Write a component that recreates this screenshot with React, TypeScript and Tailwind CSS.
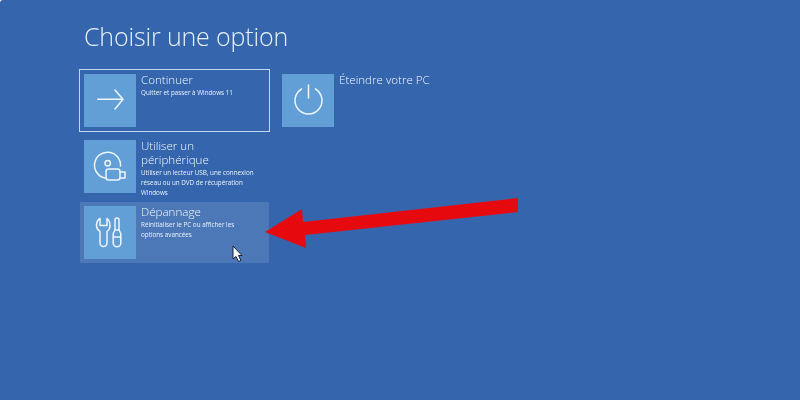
const font = { fontFamily: '"Open Sans", "Noto Sans", sans-serif' };

function Tile({ icon, title, desc, wide = true }: { icon: React.ReactNode; title: string; desc?: string; wide?: boolean }) {
  return (
    <div className="flex items-start gap-[5px]">
      <div className="h-[53px] w-[52px] shrink-0 bg-[#629fd6]">{icon}</div>
      <div className={wide ? "w-[115px]" : "w-[160px]"}>
        <div className="-mt-[1px] text-[11.6px] font-light leading-[14px] text-[#f2f7fd]">{title}</div>
        {desc && <div className="mt-[1px] text-[6.3px] leading-[10px] text-[#eaf2fa]">{desc}</div>}
      </div>
    </div>
  );
}

function Icon({ children }: { children: React.ReactNode }) {
  return (
    <svg width="52" height="53" viewBox="0 0 52 53" fill="none" stroke="#eef5fc" strokeWidth="1.5" strokeLinecap="round" strokeLinejoin="round">
      {children}
    </svg>
  );
}

export default function App() {
  return (
    <div style={font} className="relative h-[400px] w-[800px] overflow-hidden rounded-tl-[3px] bg-[#3566ad]">
      <div className="pl-[79px] pt-[20px] blur-[0.35px]">
        <h1 className="pl-[5px] text-[25px] font-light leading-[32px] tracking-[-0.15px] text-[#e8f0f9]">Choisir une option</h1>
        <div className="mt-[17px] flex items-start gap-[12px]">
          <div className="flex w-[191px] flex-col">
            <div className="h-[63px] border border-[#c3d7ee] p-[4px]">
              <Tile
                title="Continuer"
                desc="Quitter et passer à Windows 11"
                icon={
                  <Icon>
                    <path d="M13.7 25.3H39M31 16l8 9.3-8 9.7" />
                  </Icon>
                }
              />
            </div>
            <div className="mt-[8px] h-[53px] px-[5px]">
              <Tile
                title="Utiliser un périphérique"
                desc="Utiliser un lecteur USB, une connexion réseau ou un DVD de récupération Windows"
                icon={
                  <Icon>
                    <path d="M21 38A13 13 0 1 1 36.5 26" />
                    <circle cx="23.7" cy="23.3" r="2.7" />
                    <rect x="22" y="29" width="14" height="11" rx="2.5" />
                    <path d="M36 32h5v6h-5" />
                  </Icon>
                }
              />
            </div>
            <div className="ml-[1px] mr-[1px] mt-[9px] h-[61px] bg-[#4c78b7] px-[4px] pt-[4px]">
              <Tile
                title="Dépannage"
                desc="Réinitialiser le PC ou afficher les options avancées"
                icon={
                  <Icon>
                    <path d="M16 12.5C13.5 14 12.5 17 12.5 19.5 12.5 22.5 14.5 24.5 16 25.5V37a3.5 3.5 0 0 0 7 0V25.5C24.5 24.5 26 22.5 26 19.5 26 17 25 14 23 12.5V19.5H16Z" />
                    <path d="M31 24V14a2 2 0 0 1 4 0V24" />
                    <path d="M31 24 29.2 27.5V37a3.8 3.8 0 0 0 7.6 0V27.5L35 24ZM29.2 31h7.6" />
                  </Icon>
                }
              />
            </div>
          </div>
          <div className="pt-[5px]">
            <Tile
              wide={false}
              title="Éteindre votre PC"
              icon={
                <Icon>
                  <path d="M26.5 11V24" />
                  <path d="M19.5 15A13.5 13.5 0 1 0 33.5 15" />
                </Icon>
              }
            />
          </div>
        </div>
      </div>

      <svg className="absolute left-0 top-0 blur-[0.35px]" width="800" height="400" viewBox="0 0 800 400">
        <polygon points="265,232 302,209 303,222 518,198 518,212 305,235 306,248" fill="#e60a0f" />
      </svg>
      <svg className="absolute left-[232px] top-[245px] blur-[0.35px]" width="12" height="18" viewBox="0 0 12 18">
        <path d="M1 1v13l3-2.5 2.5 5 2.5-1-2.5-5H10z" fill="#f4f6fa" stroke="#1b2230" strokeWidth="1" />
      </svg>
    </div>
  );
}
